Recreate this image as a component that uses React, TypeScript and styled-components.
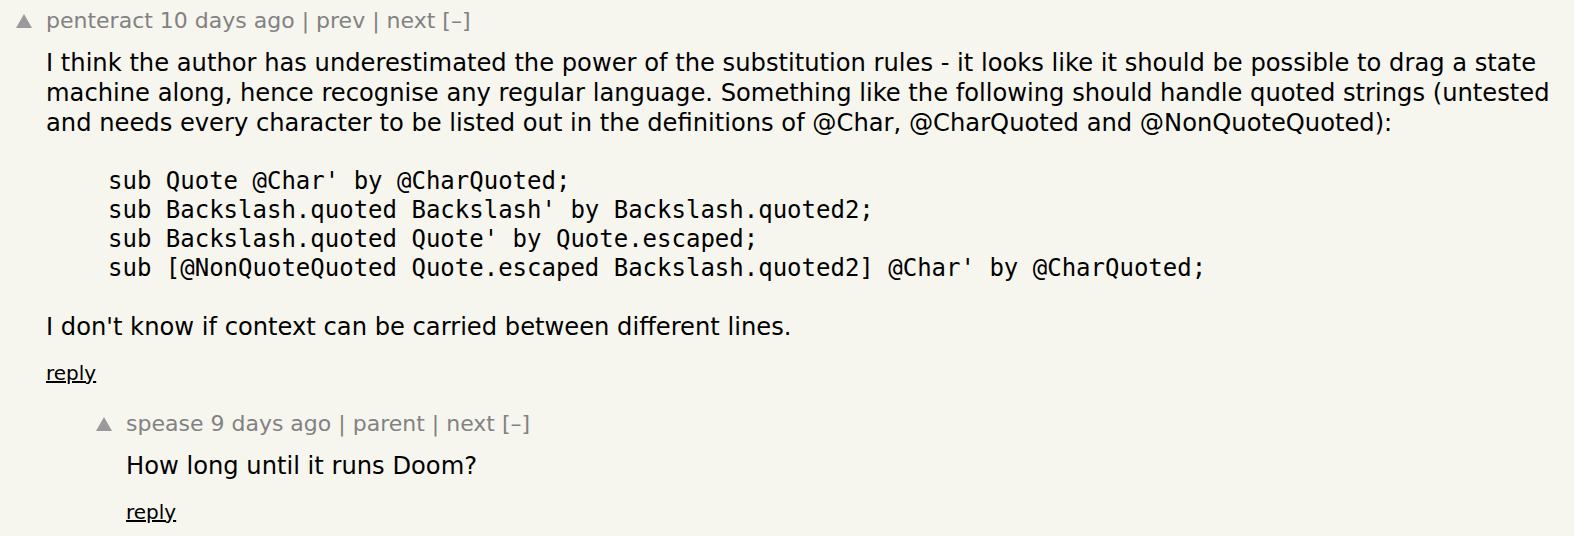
import React from 'react';
import styled, { createGlobalStyle } from 'styled-components';

const GlobalStyle = createGlobalStyle`
  html, body {
    margin: 0;
    padding: 0;
    background: #f6f6ef;
  }
  body {
    font-family: "DejaVu Sans", Verdana, sans-serif;
    color: #000;
  }
`;

const Thread = styled('div')`
  display: flex;
  flex-direction: column;
  gap: 26px;
  padding: 8px 20px 0 16px;
`;

const Comment = styled('div')<{ $depth: number }>`
  display: grid;
  grid-template-columns: 30px 1fr;
  align-items: start;
  margin-left: ${(p) => p.$depth * 80}px;
`;

// upvote arrow, a plain css triangle
const Vote = styled('div')`
  width: 0;
  height: 0;
  margin-top: 6px;
  border-left: 8px solid transparent;
  border-right: 8px solid transparent;
  border-bottom: 14px solid #9a9a9a;
`;

const Content = styled('div')`
  display: flex;
  flex-direction: column;
`;

const Head = styled('div')`
  color: #828282;
  font-size: 22px;
  line-height: 26px;
`;

const Body = styled('div')`
  margin-top: 14px;
  font-size: 24.2px;
  line-height: 30px;
`;

const Para = styled('p')`
  margin: 0;
`;

const Code = styled('pre')`
  margin: 29px 0 29px 62px;
  font-family: "DejaVu Sans Mono", monospace;
  font-size: 24px;
  line-height: 29px;
  white-space: pre;
`;

const Reply = styled('a')`
  align-self: flex-start;
  margin-top: 19px;
  color: #000;
  font-size: 20px;
  line-height: 24px;
  text-decoration: underline;
`;

interface CommentData {
  id: number;
  user: string;
  age: string;
  links: string[];
  body: React.ReactNode;
  depth: number;
}

const comments: CommentData[] = [
  {
    id: 1,
    user: 'penteract',
    age: '10 days ago',
    links: ['prev', 'next'],
    depth: 0,
    body: (
      <>
        <Para>
          I think the author has underestimated the power of the substitution rules - it looks like it should be
          possible to drag a state machine along, hence recognise any regular language. Something like the following
          should handle quoted strings (untested and needs every character to be listed out in the definitions of
          @Char, @CharQuoted and @NonQuoteQuoted):
        </Para>
        <Code>
          {`sub Quote @Char' by @CharQuoted;
sub Backslash.quoted Backslash' by Backslash.quoted2;
sub Backslash.quoted Quote' by Quote.escaped;
sub [@NonQuoteQuoted Quote.escaped Backslash.quoted2] @Char' by @CharQuoted;`}
        </Code>
        <Para>I don't know if context can be carried between different lines.</Para>
      </>
    ),
  },
  {
    id: 2,
    user: 'spease',
    age: '9 days ago',
    links: ['parent', 'next'],
    depth: 1,
    body: <Para>How long until it runs Doom?</Para>,
  },
];

export default function App() {
  return (
    <>
      <GlobalStyle />
      <Thread>
        {comments.map((c) => (
          <Comment key={c.id} $depth={c.depth}>
            <Vote />
            <Content>
              <Head>
                {c.user} {c.age}
                {c.links.map((l) => (
                  <React.Fragment key={l}>
                    {' | '}
                    <span>{l}</span>
                  </React.Fragment>
                ))}{' '}
                [–]
              </Head>
              <Body>{c.body}</Body>
              <Reply>reply</Reply>
            </Content>
          </Comment>
        ))}
      </Thread>
    </>
  );
}
